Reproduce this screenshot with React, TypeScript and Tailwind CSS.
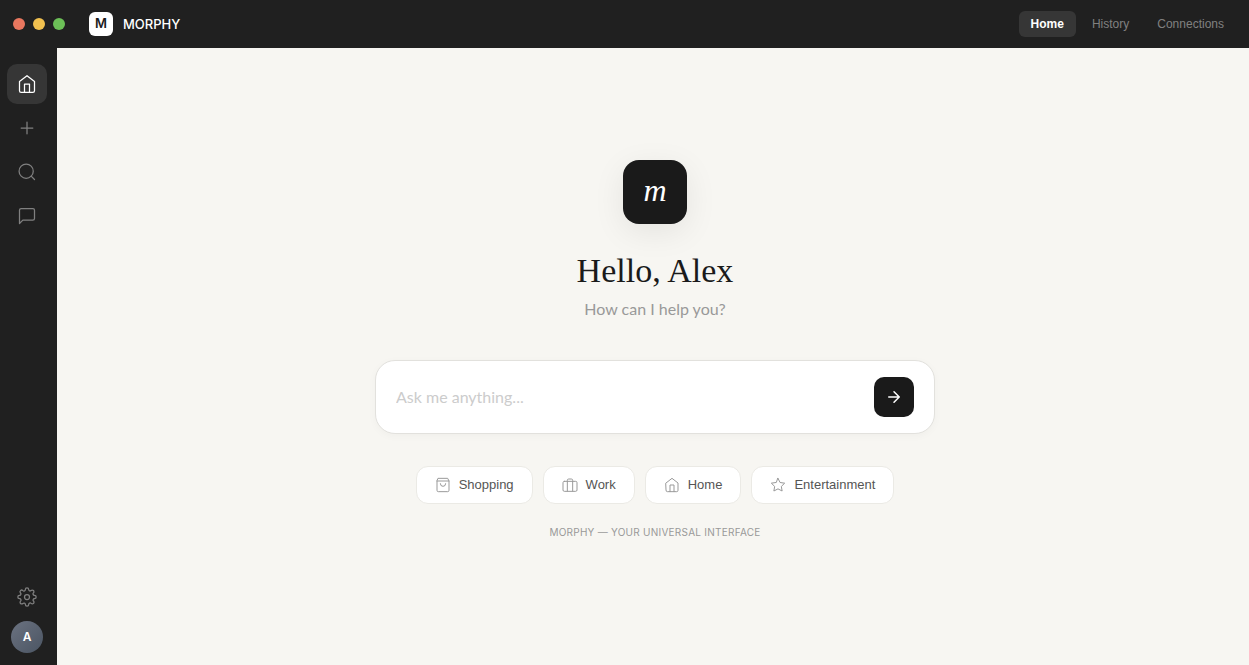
import type { ReactNode } from 'react';

const homePath = (
  <>
    <path d="M3 9l9-7 9 7v11a2 2 0 0 1-2 2H5a2 2 0 0 1-2-2z" />
    <path d="M9 22V12h6v10" />
  </>
);

function Icon({ className, width = 1.5, children }: { className: string; width?: number; children: ReactNode }) {
  return (
    <svg
      className={className}
      viewBox="0 0 24 24"
      fill="none"
      stroke="currentColor"
      strokeWidth={width}
      strokeLinecap="round"
      strokeLinejoin="round"
      aria-hidden="true"
    >
      {children}
    </svg>
  );
}

function SideButton({ label, active, children }: { label: string; active?: boolean; children: ReactNode }) {
  return (
    <button
      type="button"
      aria-label={label}
      className={`flex size-10 items-center justify-center rounded-[10px] ${active ? 'bg-[#363636] text-white' : 'text-[#808080]'}`}
    >
      <Icon className="size-5">{children}</Icon>
    </button>
  );
}

const suggestions: { label: string; icon: ReactNode }[] = [
  {
    label: 'Shopping',
    icon: (
      <>
        <path d="M5 2h14l2 4v14a2 2 0 0 1-2 2H5a2 2 0 0 1-2-2V6z" />
        <path d="M3 6h18" />
        <path d="M16 10a4 4 0 0 1-8 0" />
      </>
    ),
  },
  {
    label: 'Work',
    icon: (
      <>
        <rect x="1.5" y="6.5" width="21" height="15" rx="2" />
        <path d="M16 21V5a2 2 0 0 0-2-2h-4a2 2 0 0 0-2 2v16" />
      </>
    ),
  },
  { label: 'Home', icon: homePath },
  {
    label: 'Entertainment',
    icon: <path d="M12 2l3.09 6.26L22 9.27l-5 4.87 1.18 6.88L12 17.77l-6.18 3.25L7 14.14 2 9.27l6.91-1.01z" />,
  },
];

export default function App() {
  return (
    <div className="flex min-h-screen flex-col bg-[#f7f6f2] font-['Lato',sans-serif]">
      <header className="flex h-12 items-center justify-between bg-[#202020] px-[13px]">
        <div className="flex items-center">
          <div className="flex gap-2">
            <span className="size-3 rounded-full bg-[#e9775f]" />
            <span className="size-3 rounded-full bg-[#f2c14f]" />
            <span className="size-3 rounded-full bg-[#6cc057]" />
          </div>
          <div className="ml-6 flex items-center gap-[10px] font-['Inter',sans-serif]">
            <span className="flex size-6 items-center justify-center rounded-md bg-white text-[13px] font-semibold text-[#1a1a1a]">
              M
            </span>
            <span className="text-[13px] leading-6 font-medium text-white">MORPHY</span>
          </div>
        </div>
        <nav className="flex gap-1 font-['Liberation_Sans',sans-serif] text-[12px] leading-[14px] text-[#808080]">
          <a href="#home" className="rounded-md bg-[#363636] px-3 py-[6px] font-semibold text-white">Home</a>
          <a href="#history" className="rounded-md px-3 py-[6px]">History</a>
          <a href="#connections" className="rounded-md px-3 py-[6px]">Connections</a>
        </nav>
      </header>

      <div className="flex flex-1">
        <aside className="flex w-[57px] shrink-0 flex-col justify-between bg-[#202020] pt-4 pr-[10px] pb-3 pl-[7px]">
          <div className="flex flex-col items-center gap-1">
            <SideButton label="Home" active>{homePath}</SideButton>
            <SideButton label="New">
              <path d="M12 5v14M5 12h14" />
            </SideButton>
            <SideButton label="Search">
              <circle cx="11" cy="11" r="8.5" />
              <path d="M21 21l-4-4" />
            </SideButton>
            <SideButton label="Messages">
              <path d="M21 15a2 2 0 0 1-2 2H7l-4 4V5a2 2 0 0 1 2-2h14a2 2 0 0 1 2 2z" />
            </SideButton>
          </div>
          <div className="flex flex-col items-center gap-1">
            <SideButton label="Settings">
              <circle cx="12" cy="12" r="3" />
              <path d="M19.4 15a1.65 1.65 0 0 0 .33 1.82l.06.06a2 2 0 1 1-2.83 2.83l-.06-.06a1.65 1.65 0 0 0-1.82-.33 1.65 1.65 0 0 0-1 1.51V21a2 2 0 1 1-4 0v-.09A1.65 1.65 0 0 0 9 19.4a1.65 1.65 0 0 0-1.82.33l-.06.06a2 2 0 1 1-2.83-2.83l.06-.06a1.65 1.65 0 0 0 .33-1.82 1.65 1.65 0 0 0-1.51-1H3a2 2 0 1 1 0-4h.09A1.65 1.65 0 0 0 4.6 9a1.65 1.65 0 0 0-.33-1.82l-.06-.06a2 2 0 1 1 2.83-2.83l.06.06a1.65 1.65 0 0 0 1.82.33H9a1.65 1.65 0 0 0 1-1.51V3a2 2 0 1 1 4 0v.09a1.65 1.65 0 0 0 1 1.51 1.65 1.65 0 0 0 1.82-.33l.06-.06a2 2 0 1 1 2.83 2.83l-.06.06a1.65 1.65 0 0 0-.33 1.82V9a1.65 1.65 0 0 0 1.51 1H21a2 2 0 1 1 0 4h-.09a1.65 1.65 0 0 0-1.51 1z" />
            </SideButton>
            <button
              type="button"
              aria-label="Account"
              className="flex size-8 items-center justify-center rounded-full bg-linear-to-br from-[#6b7280] to-[#4b5563] font-['Inter',sans-serif] text-[12px] font-semibold text-white"
            >
              A
            </button>
          </div>
        </aside>

        <main className="flex flex-1 flex-col items-center justify-center pr-6 pb-[14px] pl-7">
          <div className="flex size-16 items-center justify-center rounded-2xl bg-[#1a1a1a] pb-1 font-['Liberation_Serif',serif] text-[32px] text-white italic shadow-[0_8px_32px_rgba(0,0,0,0.08)]">
            m
          </div>
          <h1 className="mt-6 font-['Liberation_Serif',serif] text-[34px] leading-[46px] text-[#1a1a1a]">Hello, Alex</h1>
          <p className="mt-[5px] text-[16px] leading-5 text-[#999999]">How can I help you?</p>

          <form
            className="mt-[41px] flex w-full max-w-[560px] items-center gap-3 rounded-[20px] border border-[#e2e1dd] bg-white px-5 py-4 shadow-[0_2px_8px_rgba(0,0,0,0.03)]"
            onSubmit={(event) => event.preventDefault()}
          >
            <input
              type="text"
              aria-label="Ask me anything"
              placeholder="Ask me anything..."
              className="min-w-0 flex-1 bg-transparent text-[16px] leading-6 text-[#1a1a1a] outline-none placeholder:text-[#cccccc]"
            />
            <button
              type="submit"
              aria-label="Send"
              className="flex size-10 items-center justify-center rounded-[10px] bg-[#1a1a1a] text-white"
            >
              <Icon className="size-[18px]" width={2}>
                <path d="M5 12h14M12 5l7 7-7 7" />
              </Icon>
            </button>
          </form>

          <div className="mt-8 flex flex-wrap justify-center gap-[10px]">
            {suggestions.map(({ label, icon }) => (
              <button
                key={label}
                type="button"
                className="flex items-center gap-2 rounded-xl border border-[#ebeae5] bg-white px-[18px] py-[10px] font-['Liberation_Sans',sans-serif] text-[13px] leading-4 text-[#555555]"
              >
                <Icon className="size-4 text-[#999999]">{icon}</Icon>
                {label}
              </button>
            ))}
          </div>
          <p className="mt-5 font-['Inter',sans-serif] text-[10px] leading-4 tracking-wide text-[#999999] uppercase">Morphy — Your universal interface</p>
        </main>
      </div>
    </div>
  );
}
